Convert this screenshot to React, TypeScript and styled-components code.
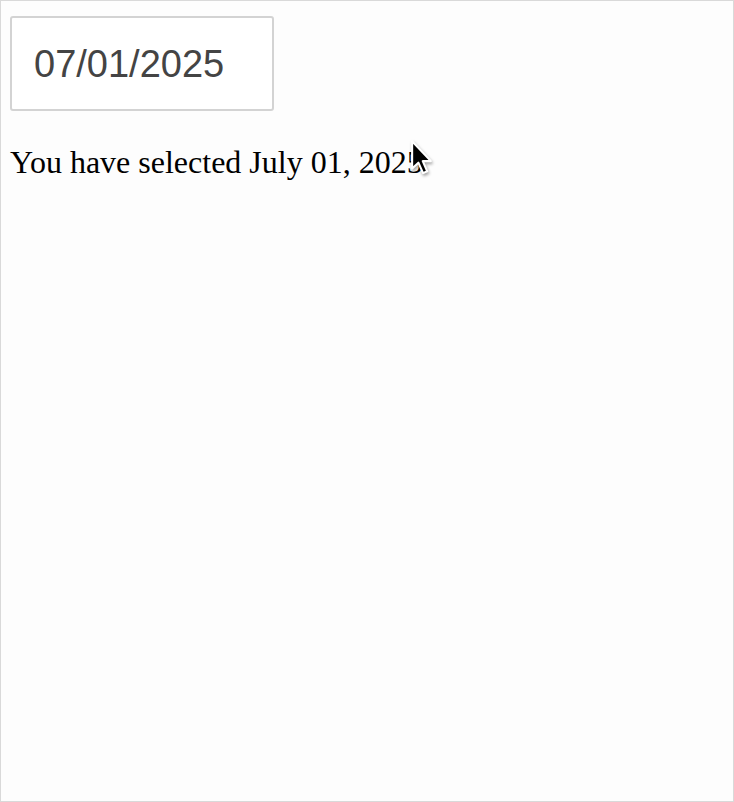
import React from "react";
import styled, { createGlobalStyle } from "styled-components";

const GlobalStyle = createGlobalStyle`
  html, body {
    margin: 0;
    padding: 0;
    background: #fdfdfd;
  }
`;

const Page = styled.div`
  position: relative;
  box-sizing: border-box;
  width: 734px;
  height: 802px;
  border: 1px solid #d9d9d9;
  padding: 15px 9px;
  background: #fdfdfd;
  font-family: "Liberation Serif", "Times New Roman", serif;
  color: #000;
`;

const DateInput = styled.input`
  display: block;
  box-sizing: border-box;
  width: 264px;
  height: 95px;
  margin: 0;
  padding: 2px 0 0 22px;
  border: 2px solid #d3d3d3;
  border-radius: 3px;
  background: #fff;
  font-family: "Liberation Sans", Arial, sans-serif;
  font-size: 38px;
  color: #444;
  outline: none;
`;

const Selected = styled.p`
  margin: 33px 0 0;
  font-size: 32px;
  line-height: normal;
`;

const Pointer = styled.svg`
  position: absolute;
  left: 408px;
  top: 137px;
  width: 25px;
  height: 40px;
  filter: drop-shadow(1px 2px 1.5px rgba(0, 0, 0, 0.35));
`;

const App = () => (
  <Page>
    <GlobalStyle />
    <DateInput type="text" value="07/01/2025" readOnly />
    <Selected>You have selected July 01, 2025</Selected>
    <Pointer viewBox="0 0 24 38">
      <path
        d="M3 3 L3 29 L9 23.5 L13.5 33.5 L17.5 31.8 L13.2 22 L21 22 Z"
        fill="#000"
        stroke="#fff"
        strokeWidth="2"
        strokeLinejoin="round"
      />
    </Pointer>
  </Page>
);

export default App;
